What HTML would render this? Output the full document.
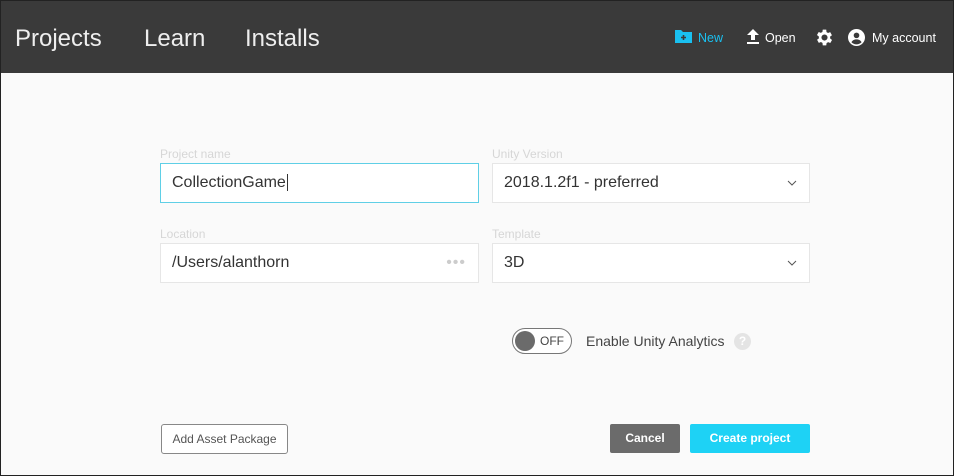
<!DOCTYPE html>
<html><head><style>
*{box-sizing:border-box;margin:0;padding:0}
body{width:954px;height:476px;overflow:hidden;font-family:"Liberation Sans",sans-serif;background:#fafafa;position:relative}
.frame{position:absolute;left:0;top:0;width:954px;height:476px;border:1px solid #222;pointer-events:none}
.hdr{position:absolute;left:0;top:0;width:954px;height:73px;background:#3a3a3a}
.tab{position:absolute;top:25px;color:#eee;font-size:24px}
.hi{position:absolute;top:31px;font-size:12.5px;color:#fff}
.lbl{position:absolute;font-size:12px;color:#d6d6d6}
.fld{position:absolute;height:40px;background:#fff;border:1px solid #e6e6e6;font-size:16px;color:#333;padding:10px 11px}
.chev{position:absolute;right:12px;top:12px}
.btn{position:absolute;top:424px;height:29px;font-size:12px;font-weight:bold;color:#fff;text-align:center;line-height:29px;border-radius:2px}
</style></head><body>
<div class="hdr">
<div class="tab" style="left:15px">Projects</div>
<div class="tab" style="left:144px">Learn</div>
<div class="tab" style="left:245px">Installs</div>
<svg style="position:absolute;left:675px;top:29px" width="17" height="14" viewBox="0 0 17 14"><path d="M0 1h6l2 2h9v11H0z" fill="#1ac0f0"/><path d="M8.5 6v5M6 8.5h5" stroke="#3a3a3a" stroke-width="1.6"/></svg>
<div class="hi" style="left:698px;color:#1ac0f0">New</div>
<svg style="position:absolute;left:746px;top:29px" width="14" height="16" viewBox="0 0 14 16"><path d="M7 0L1 6h4v5h4V6h4z M1 13h12v2H1z" fill="#fff"/></svg>
<div class="hi" style="left:765px">Open</div>
<svg style="position:absolute;left:814px;top:27px" width="21" height="21" viewBox="0 0 24 24"><path fill="#fff" d="M19.4 13a7.5 7.5 0 000-2l2.1-1.6-2-3.5-2.5 1a7 7 0 00-1.7-1L15 3h-4l-.4 2.7a7 7 0 00-1.7 1l-2.5-1-2 3.5L6.6 11a7.5 7.5 0 000 2l-2.1 1.6 2 3.5 2.5-1a7 7 0 001.7 1L11 21h4l.4-2.7a7 7 0 001.7-1l2.5 1 2-3.5zM13 15.5a3.5 3.5 0 110-7 3.5 3.5 0 010 7z" transform="translate(-1 0)"/></svg>
<svg style="position:absolute;left:848px;top:29px" width="17" height="17" viewBox="0 0 20 20"><circle cx="10" cy="10" r="10" fill="#fff"/><circle cx="10" cy="7.5" r="3.3" fill="#3a3a3a"/><path d="M4 15.5c1.5-2.5 3.5-3.3 6-3.3s4.5.8 6 3.3c-1.5 1.7-3.6 2.6-6 2.6s-4.5-.9-6-2.6z" fill="#3a3a3a"/></svg>
<div class="hi" style="left:872px">My account</div>
</div>
<div class="lbl" style="left:160px;top:147px">Project name</div>
<div class="fld" style="left:160px;top:163px;width:319px;border-color:#5fcfe6">CollectionGame<span style="border-left:1px solid #333;margin-left:1px"></span></div>
<div class="lbl" style="left:492px;top:147px">Unity Version</div>
<div class="fld" style="left:492px;top:163px;width:318px">2018.1.2f1 - preferred<svg class="chev" width="10" height="14"><path d="M1 5l4 4 4-4" stroke="#555" fill="none"/></svg></div>
<div class="lbl" style="left:160px;top:227px">Location</div>
<div class="fld" style="left:160px;top:243px;width:319px">/Users/alanthorn<span style="position:absolute;right:12px;top:10px;color:#ccc;font-size:16px;letter-spacing:1px">•••</span></div>
<div class="lbl" style="left:492px;top:227px">Template</div>
<div class="fld" style="left:492px;top:243px;width:318px">3D<svg class="chev" width="10" height="14"><path d="M1 5l4 4 4-4" stroke="#555" fill="none"/></svg></div>
<div style="position:absolute;left:512px;top:328px;width:60px;height:26px;border:1px solid #777;border-radius:13px;background:#fff"><div style="position:absolute;left:2px;top:2px;width:20px;height:20px;border-radius:50%;background:#6b6b6b"></div><span style="position:absolute;left:27px;top:5px;font-size:12px;color:#444">OFF</span></div>
<div style="position:absolute;left:586px;top:333px;font-size:14px;color:#444">Enable Unity Analytics</div>
<div style="position:absolute;left:734px;top:333px;width:17px;height:17px;border-radius:50%;background:#e4e4e4;color:#fff;font-size:12px;font-weight:bold;text-align:center;line-height:17px">?</div>
<div style="position:absolute;left:161px;top:424px;width:127px;height:30px;border:1px solid #888;border-radius:3px;font-size:12px;color:#555;text-align:center;line-height:28px;background:#fff">Add Asset Package</div>
<div class="btn" style="left:610px;width:70px;background:#6b6b6b">Cancel</div>
<div class="btn" style="left:690px;width:120px;background:#1ed2f5">Create project</div>
<div class="frame"></div>
</body></html>
